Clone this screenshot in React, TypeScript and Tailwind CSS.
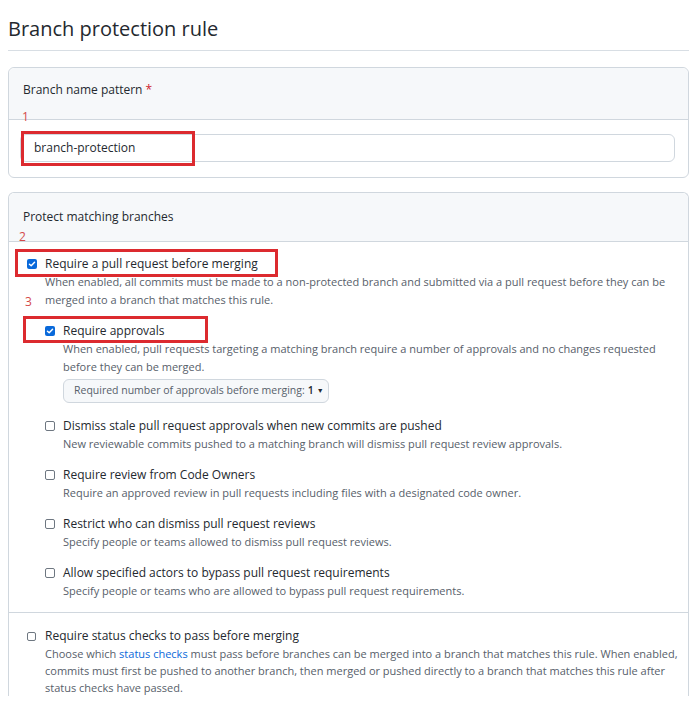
import React from "react";

const Checkbox: React.FC<{ checked?: boolean; small?: boolean }> = ({ checked, small }) => {
  if (checked) {
    return (
      <span className="flex h-[10px] w-[10px] shrink-0 items-center justify-center rounded-[2px] bg-[#0969da]">
        <svg width="8" height="8" viewBox="0 0 10 10" fill="none">
          <path d="M1.8 5.2 L4 7.3 L8.2 2.8" stroke="white" strokeWidth="1.8" strokeLinecap="round" strokeLinejoin="round" />
        </svg>
      </span>
    );
  }
  return (
    <span
      className={`shrink-0 rounded-[2px] border border-[#6e7781] bg-white ${
        small ? "h-[9px] w-[9px]" : "h-[10px] w-[10px]"
      }`}
    />
  );
};

interface OptionProps {
  title: string;
  desc: React.ReactNode;
  checked?: boolean;
  className?: string;
  children?: React.ReactNode;
}

const Option: React.FC<OptionProps> = ({ title, desc, checked, className, children }) => (
  <div className={`flex gap-[8px] ${className ?? ""}`}>
    <div className="flex h-[18px] items-center">
      <Checkbox checked={checked} />
    </div>
    <div className="flex-1">
      <div className="text-[12px] leading-[18px] font-medium text-[#24292f]">{title}</div>
      <div className="text-[11px] leading-[18px] text-[#57606a]">{desc}</div>
      {children}
    </div>
  </div>
);

const Note: React.FC<{ n: string; className: string }> = ({ n, className }) => (
  <span className={`absolute text-[12px] leading-[14px] text-[#d44a4a] ${className}`}>{n}</span>
);

const Mark: React.FC<{ className: string }> = ({ className }) => (
  <span className={`absolute border-[3px] border-[#dc2a2f] ${className}`} />
);

export default function App() {
  return (
    <div className="h-[710px] w-[694px] overflow-hidden bg-white font-['Open_Sans',sans-serif] text-[#24292f]">
      <div className="pl-[8px] pr-[5px]">
        <h1 className="border-b border-[#d8dee4] pt-[14px] pb-[6px] text-[20px] leading-[30px] font-normal">
          Branch protection rule
        </h1>

        <div className="relative mt-4 rounded-md border border-[#d0d7de]">
          <div className="h-[52px] rounded-t-md border-b border-[#d0d7de] bg-[#f6f8fa] px-[14px] pt-[12px] text-[12px] leading-[20px]">
            Branch name pattern <span className="text-[#cf222e]">*</span>
          </div>
          <div className="px-[11px] pt-[14px] pb-[15px]">
            <div className="flex h-[28px] w-[655px] items-center rounded-md border border-[#d0d7de] px-[13px] text-[12px]">
              branch-protection
            </div>
          </div>
          <Note n="1" className="left-[13px] top-[42px]" />
          <Mark className="left-[12px] top-[63px] h-[35px] w-[174px]" />
        </div>

        <div className="relative mt-[14px] rounded-t-md border-x border-t border-[#d0d7de]">
          <div className="h-[49px] rounded-t-md border-b border-[#d0d7de] bg-[#f6f8fa] px-[14px] pt-[14px] text-[12px] leading-[20px]">
            Protect matching branches
          </div>
          <div className="border-b border-[#d0d7de] pl-[18px] pr-[12px] pt-[13px] pb-[12px]">
            <Option
              checked
              title="Require a pull request before merging"
              desc="When enabled, all commits must be made to a non-protected branch and submitted via a pull request before they can be merged into a branch that matches this rule."
            >
              <Option
                checked
                className="mt-[13px]"
                title="Require approvals"
                desc="When enabled, pull requests targeting a matching branch require a number of approvals and no changes requested before they can be merged."
              >
                <div className="mt-[3px] flex h-[24px] w-[266px] items-center whitespace-nowrap rounded-md border border-[#d0d7de] bg-[#f6f8fa] px-[10px] text-[10.5px] text-[#57606a]">
                  Required number of approvals before merging:
                  <span className="ml-[3px] font-semibold text-[#24292f]">1</span>
                  <span className="ml-[3px] text-[7px] text-[#24292f]">▼</span>
                </div>
              </Option>
              <Option
                className="mt-[14px]"
                title="Dismiss stale pull request approvals when new commits are pushed"
                desc="New reviewable commits pushed to a matching branch will dismiss pull request review approvals."
              />
              <Option
                className="mt-[13px]"
                title="Require review from Code Owners"
                desc="Require an approved review in pull requests including files with a designated code owner."
              />
              <Option
                className="mt-[13px]"
                title="Restrict who can dismiss pull request reviews"
                desc="Specify people or teams allowed to dismiss pull request reviews."
              />
              <Option
                className="mt-[13px]"
                title="Allow specified actors to bypass pull request requirements"
                desc="Specify people or teams who are allowed to bypass pull request requirements."
              />
            </Option>
          </div>
          <div className="pl-[18px] pr-[8px] pt-[14px]">
            <div className="flex gap-[9px]">
              <div className="flex h-[18px] items-center">
                <Checkbox small />
              </div>
              <div className="flex-1">
                <div className="text-[12px] leading-[18px] font-medium">Require status checks to pass before merging</div>
                <p className="text-[11px] leading-[17px] text-[#57606a]">
                  Choose which <a className="text-[#0969da]">status checks</a> must pass before branches can be
                  merged into a branch that matches this rule. When enabled, commits must first be pushed to another
                  branch, then merged or pushed directly to a branch that matches this rule after status checks have
                  passed.
                </p>
              </div>
            </div>
          </div>
          <Note n="2" className="left-[10px] top-[37px]" />
          <Mark className="left-[6px] top-[56px] h-[28px] w-[263px]" />
          <Note n="3" className="left-[16px] top-[102px]" />
          <Mark className="left-[14px] top-[123px] h-[27px] w-[185px]" />
        </div>
      </div>
    </div>
  );
}
